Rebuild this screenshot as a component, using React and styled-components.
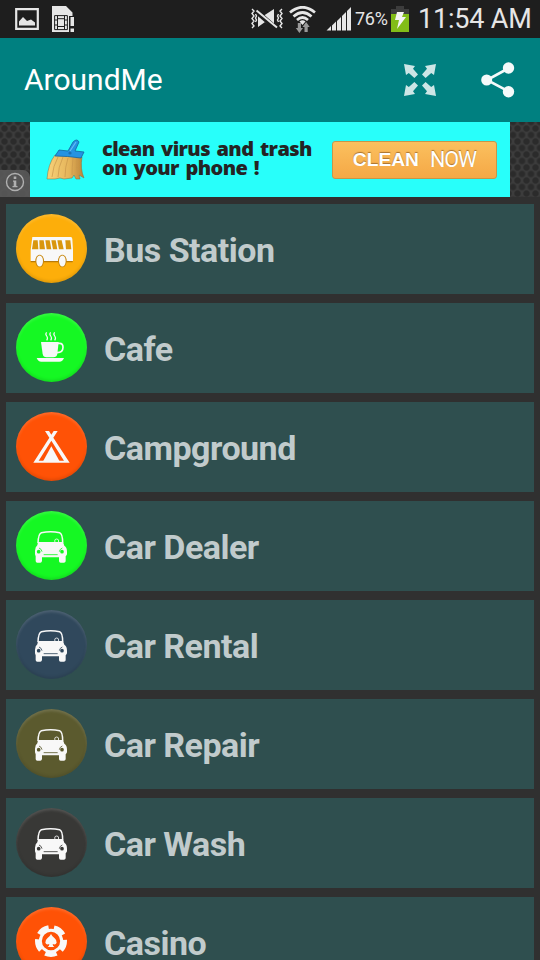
import React from 'react';
import styled, { createGlobalStyle } from 'styled-components';

const GlobalStyle = createGlobalStyle`
  * {
    box-sizing: border-box;
  }

  body {
    margin: 0;
    background-color: #303030;
    font-family: Roboto, "Noto Sans", sans-serif;
  }
`;

const Screen = styled.div`
  display: flex;
  flex-direction: column;
  width: 540px;
  height: 960px;
  overflow: hidden;
  background-color: #303030;
`;

const StatusBar = styled.div`
  display: flex;
  justify-content: space-between;
  flex: 0 0 38px;
  height: 38px;
  background-color: #1e1e1e;
  color: #e6e6e6;
`;

const StatusGroup = styled.div`
  display: flex;
  align-items: center;
`;

const StatusLeft = styled(StatusGroup)`
  gap: 13px;
  padding-left: 15px;
`;

const StatusIcons = styled(StatusGroup)`
  gap: 6px;
  margin-right: 4px;
`;

const Percent = styled.span`
  width: 36px;
  font-size: 18px;
  line-height: 38px;
  letter-spacing: -0.3px;
  white-space: nowrap;
`;

const Clock = styled.span`
  width: 122px;
  margin-left: 9px;
  font-size: 27px;
  line-height: 37px;
  letter-spacing: -0.2px;
  white-space: nowrap;
`;

const ActionBar = styled.header`
  display: flex;
  align-items: center;
  flex: 0 0 84px;
  padding: 0 25px 0 24px;
  background-color: #008080;
`;

const Title = styled.h1`
  flex: 1;
  margin: 0;
  font-size: 30px;
  font-weight: 400;
  line-height: 84px;
  color: #fff;
`;

const ActionButton = styled.button`
  display: flex;
  margin: 0 0 0 45px;
  padding: 0;
  border: 0;
  background: none;
`;

const AdStrip = styled.section`
  display: flex;
  flex: 0 0 75px;
  background-color: #3c3c3c;
  background-image: radial-gradient(circle at 50% 50%, #2b2b2b 0 2.6px, transparent 3.8px),
    radial-gradient(circle at 50% 50%, #2b2b2b 0 2.6px, transparent 3.8px);
  background-size: 9px 13px;
  background-position: 0 0, 4.5px 6.5px;
`;

const AdInfo = styled.div`
  display: flex;
  align-items: center;
  justify-content: center;
  align-self: flex-end;
  width: 30px;
  height: 27px;
  padding-bottom: 3px;
  border-top-right-radius: 7px;
  background-color: #5a5a5ae0;
`;

const AdBanner = styled.div`
  display: flex;
  align-items: center;
  width: 480px;
  padding-left: 15px;
  background-color: #28fffa;
`;

const AdText = styled.p`
  width: 230px;
  margin: -4px 0 0 15px;
  font-family: "Open Sans", sans-serif;
  font-size: 20px;
  font-weight: 800;
  line-height: 19px;
  letter-spacing: -0.6px;
  word-spacing: 2px;
  white-space: nowrap;
  color: #242424;
`;

const CleanButton = styled.button`
  display: flex;
  align-items: center;
  justify-content: center;
  gap: 11px;
  width: 165px;
  height: 38px;
  padding: 0;
  border: 1px solid #c79648;
  border-radius: 3px;
  background: linear-gradient(#fbc05e, #f5a846);
  font-family: "Liberation Sans", sans-serif;
  font-size: 19.2px;
  color: #fff;
  text-shadow: 0 -1px 1px #a8732f;
`;

const Now = styled.span`
  font-family: Roboto, sans-serif;
  font-size: 21.5px;
  letter-spacing: -1px;
`;

const List = styled.ul`
  display: flex;
  flex-direction: column;
  gap: 9px;
  margin: 0;
  padding: 7px 6px 0;
  list-style: none;
`;

const Row = styled.li`
  display: flex;
  flex: 0 0 90px;
  padding: 10px 10px 0;
  background-color: #2f4f4f;
`;

const Badge = styled.div`
  width: 71px;
  height: 69px;
  border-radius: 50%;
  background-color: ${({ color }) => color};
  box-shadow: inset 0 -2px 3px #0000001c, inset 0 2px 3px #ffffff26;
  color: ${({ color }) => color};
`;

const Label = styled.span`
  margin-left: 17px;
  font-size: 34px;
  font-weight: 700;
  line-height: 73px;
  letter-spacing: -0.5px;
  color: #c1cbcc;
`;

const BadgeSvg = ({ children }) => (
  <svg width="71" height="69" viewBox="0 0 213 207" fill="#f8f8f8">
    {children}
  </svg>
);

const BusIcon = () => (
  <BadgeSvg>
    <path d="M44 143h126" stroke="#b87a08" strokeWidth="4" />
    <path d="M49 69H165Q168 69 169 75L171 108V141H44V108Z" />
    <g fill="#d9960e">
      <path d="M52 79h13l2 27H48z" />
      <path d="M70 79h13l4 27H71z" />
      <path d="M88 79h13l5 27H92z" />
      <path d="M106 79h13l5 27h-13z" />
      <path d="M124 79h13l6 27h-14z" />
      <path d="M148 79h15l3 27h-16z" />
    </g>
    <ellipse cx="71" cy="141" rx="13" ry="19" fill="#c78509" />
    <ellipse cx="139" cy="141" rx="13" ry="19" fill="#c78509" />
    <ellipse cx="71" cy="141" rx="10" ry="16.5" />
    <ellipse cx="139" cy="141" rx="10" ry="16.5" />
  </BadgeSvg>
);

const CafeIcon = () => (
  <BadgeSvg>
    <path d="M75 87h53l-4 36q-2 10-12 10H91q-9 0-11-10z" />
    <path
      d="M125 91h6q10 0 10 12 0 16-18 16"
      fill="none"
      stroke="#f8f8f8"
      strokeWidth="5"
    />
    <path
      d="M92 58q-5 5 0 11t0 13M104 58q-5 5 0 11t0 13M116 58q-5 5 0 11t0 13"
      fill="none"
      stroke="#f8f8f8"
      strokeWidth="3.5"
    />
    <path d="M62 135h82q-4 11-14 11H76q-10 0-14-11z" />
  </BadgeSvg>
);

const TentIcon = () => (
  <BadgeSvg>
    <path d="M87 57h12l7 11 7-11h12l-13 20 49 75H52l48-75zM106 86 68 146h76z" fillRule="evenodd" />
    <path d="M106 103 132 150H80z" />
  </BadgeSvg>
);

const CarIcon = () => (
  <BadgeSvg>
    <path
      d="M66 96Q67 68 76 65Q104 60 131 65Q140 68 140 96"
      fill="none"
      stroke="#f8f8f8"
      strokeWidth="4.5"
    />
    <path d="M66 93H141L145 104Q153 108 153 122V130Q151 134 149 136V151Q148 155 144 155H134Q129 155 129 150V139H78V150Q77 155 73 155H64Q59 155 59 150V136L57 130V119Q58 107 64 103Z" />
    <circle cx="122" cy="90" r="6" fill="none" stroke="#f8f8f8" strokeWidth="2.5" />
    <circle cx="68" cy="122" r="5.5" fill="currentColor" />
    <circle cx="138" cy="122" r="5.5" fill="currentColor" />
    <path
      d="M83 131h42M69 111q8 3 9 11M139 111q-8 3-9 11"
      fill="none"
      stroke="currentColor"
      strokeWidth="2.5"
    />
  </BadgeSvg>
);

const ChipIcon = () => (
  <BadgeSvg>
    <circle cx="105" cy="102" r="32" fill="none" stroke="#f8f8f8" strokeWidth="9" />
    <circle
      cx="105"
      cy="102"
      r="41"
      fill="none"
      stroke="#f8f8f8"
      strokeWidth="14"
      pathLength="50"
      strokeDasharray="6.8 3.2"
      strokeDashoffset="-9.1"
    />
    <path d="M105 81q3 7 11 13 7 6 6 13-3 8-12 4 0 6 5 9H95q5-3 5-9-9 4-12-4-1-7 6-13 8-6 11-13z" />
  </BadgeSvg>
);

const PictureIcon = () => (
  <svg width="24" height="22" viewBox="0 0 24 22">
    <path d="M1.2 1.2h21.6v19.6H1.2z" fill="none" stroke="#e6e6e6" strokeWidth="2.2" />
    <path d="M4 17.5v-4l4-4.5 4 4 4-1.5 4 3v3z" fill="#e6e6e6" />
  </svg>
);

const SimIcon = () => (
  <svg width="23" height="27" viewBox="0 0 23 27">
    <path d="M0 0h14l6.5 6.5V11H17v15H0z" fill="#e6e6e6" />
    <path
      d="M2.6 9.6h12.800v14H2.600zM5.500 9.600v14M12.500 9.600v14M2.600 14h3M2.600 19h3M12.500 14h3M12.500 19h3M5.500 12.700h7M5.500 20.500h7"
      fill="none"
      stroke="#1e1e1e"
      strokeWidth="1"
    />
    <path d="M17 10h6v16h-6z" fill="#1e1e1e" />
    <path d="M18.5 11H22v9h-3.500zM18.500 22.500H22V26h-3.500z" fill="#e6e6e6" />
  </svg>
);

const MuteIcon = () => (
  <svg width="32" height="22" viewBox="0 0 32 22" fill="none" stroke="#e6e6e6">
    <path d="M7 7.5h6L23 1v19l-9-6-7 5z" fill="#e6e6e6" stroke="none" />
    <path d="M5.5 3.500 25 20.500" stroke="#1e1e1e" strokeWidth="5" />
    <path d="M5.5 2.500 26 19.500" strokeWidth="2" />
    <path
      d="M1 1l2 2-2 2.500 2 2.500-2 2.500 2 2.500-2 2.500 2 2.500-2 2M31 1l-2 2 2 2.500-2 2.500 2 2.500-2 2.500 2 2.500-2 2.500 2 2M4.500 6l1 2-1 2 1 2-1 2M27.500 6l-1 2 1 2-1 2 1 2"
      strokeWidth="1.4"
    />
  </svg>
);

const WifiIcon = () => (
  <svg width="31" height="27" viewBox="0 0 31 27" fill="none" stroke="#e6e6e6">
    <path d="M1 6.5Q13.500-4 26 6.500M4.500 10.500Q13.500 2.500 22.500 10.500M8 14Q13.500 9 19 14" strokeWidth="2.7" />
    <path d="M10.500 15.500q3-2.500 6 0l-3 3.500z" fill="#e6e6e6" stroke="none" />
    <path
      d="M8.800 17H12v5h2l-3.600 5-3.600-5h2zM15.500 26h3.200v-5h2l-3.600-5-3.600 5h2z"
      fill="#999"
      stroke="none"
    />
  </svg>
);

const SignalIcon = () => (
  <svg width="25" height="24" viewBox="0 0 25 24" fill="#e6e6e6">
    <path d="M.5 23.500 5 19v4.500zM6 18.500l4-4v9H6zM11 14l4-4v13.500h-4zM16 9l4-4v18.500h-4zM21 4l4-4v23.500h-4z" />
  </svg>
);

const BatteryIcon = () => (
  <svg width="18" height="26" viewBox="0 0 18 26">
    <path d="M5 0h8v3h5v6H0V3h5z" fill="#3d3d3d" />
    <path d="M0 8h18v18H0z" fill="#82bd18" />
    <path d="M6 6h7l-2 5h4L6 23l2-9H4z" fill="#f4f4f4" />
  </svg>
);

const ExpandIcon = () => (
  <svg width="32" height="32" viewBox="0 0 32 32" fill="#cce6e6">
    <g id="arrow">
      <path d="M0 0 11 2 9 4.800 14 10.400 10.400 14 4.800 9 2 11z" />
    </g>
    <use href="#arrow" transform="matrix(-1 0 0 1 32 0)" />
    <use href="#arrow" transform="matrix(1 0 0 -1 0 32)" />
    <use href="#arrow" transform="matrix(-1 0 0 -1 32 32)" />
  </svg>
);

const ShareIcon = () => (
  <svg width="34" height="36" viewBox="0 0 34 36" fill="#f5fafa">
    <path d="M28 6 6 18 28 29.700" fill="none" stroke="#f5fafa" strokeWidth="2.6" />
    <circle cx="27.5" cy="6" r="5.7" />
    <circle cx="5.7" cy="18" r="5.5" />
    <circle cx="27.5" cy="29.7" r="5.7" />
  </svg>
);

const InfoIcon = () => (
  <svg width="20" height="20" viewBox="0 0 20 20">
    <circle cx="10" cy="10" r="8.5" fill="none" stroke="#b0b0b0" strokeWidth="1.4" />
    <path d="M8.700 4.500h2.600V7H8.700zM8 8.500h3.300V14h1.200v1.200h-5V14h1.200V9.700H8z" fill="#b0b0b0" />
  </svg>
);

const BroomIcon = () => (
  <svg width="42" height="42" viewBox="0 0 42 42">
    <defs>
      <linearGradient id="bristles" x1="0" x2="1">
        <stop offset="0" stopColor="#f7d279" />
        <stop offset="0.6" stopColor="#e5b45a" />
        <stop offset="1" stopColor="#b98238" />
      </linearGradient>
    </defs>
    <path
      d="M10 16Q3 25 2 40h8l5-1 4 1 8-1 2-3 2 4h4l-1-4 5 3Q35 30 37 18z"
      fill="url(#bristles)"
      stroke="#8b6a3c"
      strokeWidth=".5"
    />
    <path
      d="M13 18Q8 27 7 38M18 18Q13 29 13 38M23 19Q20 28 20 38M28 19Q27 29 27 36M32 19Q31 29 33 37"
      fill="none"
      stroke="#c8974a"
      strokeWidth=".7"
    />
    <path d="M14 11 23 12 28 3Q32-1 34 3L30 12 39 13 36 19Q22 17 10 17Z" fill="#2493e2" stroke="#14659f" strokeWidth=".8" />
    <path d="M25 12 31 3" stroke="#67bdf4" strokeWidth="1.2" />
    <circle cx="25" cy="14" r="1.6" fill="#1b70b5" />
  </svg>
);

const places = [
  { name: 'Bus Station', color: '#fdae0a', icon: BusIcon },
  { name: 'Cafe', color: '#15f823', icon: CafeIcon },
  { name: 'Campground', color: '#ff5206', icon: TentIcon },
  { name: 'Car Dealer', color: '#15f823', icon: CarIcon },
  { name: 'Car Rental', color: '#30485c', icon: CarIcon },
  { name: 'Car Repair', color: '#5b5a2e', icon: CarIcon },
  { name: 'Car Wash', color: '#383836', icon: CarIcon },
  { name: 'Casino', color: '#ff5206', icon: ChipIcon },
];

const PlaceRow = ({ place }) => {
  const Icon = place.icon;
  return (
    <Row>
      <Badge color={place.color}>
        <Icon />
      </Badge>
      <Label>{place.name}</Label>
    </Row>
  );
};

const App = () => (
  <>
    <GlobalStyle />
    <Screen>
      <StatusBar>
        <StatusLeft>
          <PictureIcon />
          <SimIcon />
        </StatusLeft>
        <StatusGroup>
          <StatusIcons>
            <MuteIcon />
            <WifiIcon />
            <SignalIcon />
          </StatusIcons>
          <Percent>76%</Percent>
          <BatteryIcon />
          <Clock>11:54 AM</Clock>
        </StatusGroup>
      </StatusBar>
      <ActionBar>
        <Title>AroundMe</Title>
        <ActionButton aria-label="Full screen">
          <ExpandIcon />
        </ActionButton>
        <ActionButton aria-label="Share">
          <ShareIcon />
        </ActionButton>
      </ActionBar>
      <AdStrip>
        <AdInfo>
          <InfoIcon />
        </AdInfo>
        <AdBanner>
          <BroomIcon />
          <AdText>
            clean virus and trash
            <br />
            on your phone !
          </AdText>
          <CleanButton>
            <b>CLEAN</b>
            <Now>NOW</Now>
          </CleanButton>
        </AdBanner>
      </AdStrip>
      <List>
        {places.map(place => (
          <PlaceRow key={place.name} place={place} />
        ))}
      </List>
    </Screen>
  </>
);

export default App;
